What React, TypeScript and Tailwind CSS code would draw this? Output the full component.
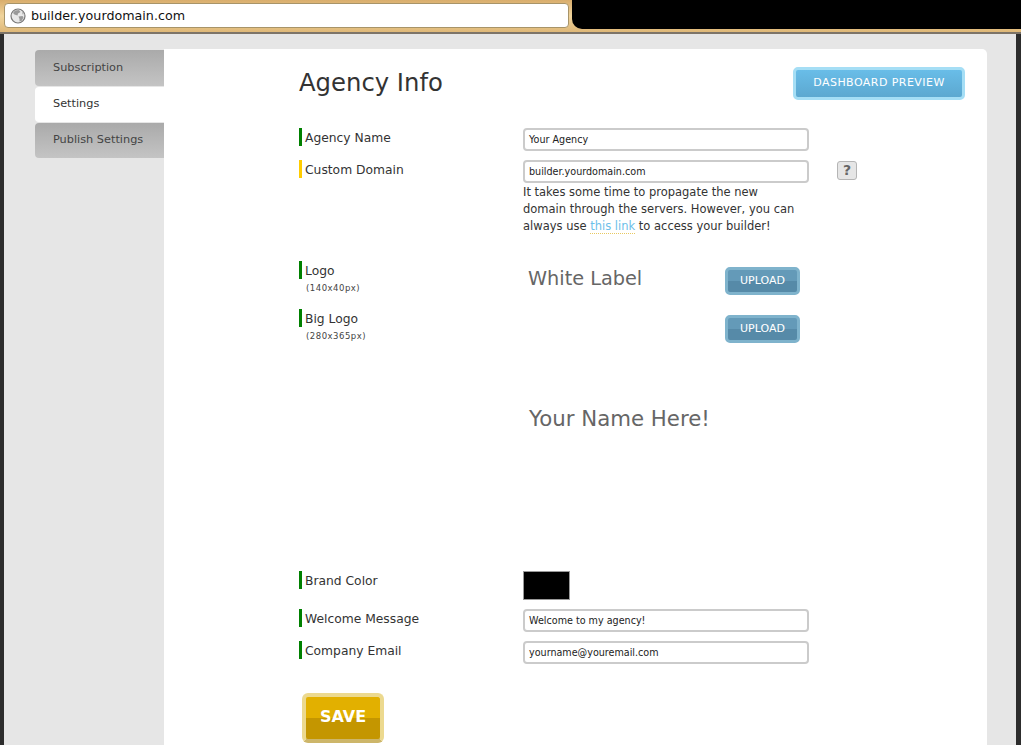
const font = "font-['DejaVu_Sans',sans-serif]";

function Globe() {
  return (
    <svg width="16" height="16" viewBox="0 0 16 16" className="shrink-0">
      <circle cx="8" cy="8" r="7" fill="#e8e8e8" stroke="#777" strokeWidth="1.2" />
      <path d="M5 2.5 L9 2 L10.5 4 L8 5.5 L7.5 7.5 L4.5 6.5 L3 5 Z" fill="#999" />
      <path d="M8.5 8.5 L12.5 8 L13.5 9.5 L11.5 13 L9.5 13.5 L9.5 11 Z" fill="#999" />
      <path d="M12 3.5 L14 6 L12.5 6.5 Z" fill="#aaa" />
    </svg>
  );
}

function Label({ text, hint, color = "bg-[#008000]" }: { text: string; hint?: string; color?: string }) {
  return (
    <div className="w-[224px] shrink-0">
      <div className="flex">
        <span className={`w-[3px] h-[18px] shrink-0 ${color}`} />
        <span className="ml-[3px] mt-px text-[12.3px] leading-[18px] text-[#333]">{text}</span>
      </div>
      {hint && <div className="ml-[7px] text-[8.5px] tracking-[0.5px] leading-[11px] mt-[3px] text-[#444]">{hint}</div>}
    </div>
  );
}

function Field({ value }: { value: string }) {
  return (
    <div className="w-[286px] h-[23px] border-2 border-[#cbcbcb] rounded-[4px] bg-white pl-[4px] text-[9.6px] leading-[19px] text-[#222]">
      {value}
    </div>
  );
}

function UploadButton() {
  return (
    <div className="w-[75px] h-[28px] rounded-[5px] border-[3px] border-[#7fb3cc] bg-[linear-gradient(#649ab8_50%,#568aa8_50%)] text-center text-[11px] leading-[21px] text-white">
      UPLOAD
    </div>
  );
}

function Tab({ text, active, height }: { text: string; active?: boolean; height: string }) {
  return (
    <div
      className={`pl-[18px] text-[11.3px] rounded-l-[4px] flex items-center ${height} ${
        active ? "bg-white text-[#333]" : "bg-[linear-gradient(#aaaaaa,#c4c4c4)] text-[#444]"
      }`}
    >
      {text}
    </div>
  );
}

export default function App() {
  return (
    <div className={`w-[1021px] h-[745px] overflow-hidden flex flex-col bg-[#2d2d2d] ${font}`}>
      <div className="h-[34px] shrink-0 flex bg-[linear-gradient(#d9ad6c,#f0d49c_50%,#dfb878)] border-b-2 border-[#7d7468]">
        <div className="ml-[4px] mt-[3px] w-[565px] h-[25px] bg-white rounded-[4px] border border-[#a89468] flex items-center pl-[5px] gap-[5px]">
          <Globe />
          <span className="text-[12.7px] text-[#111]">builder.yourdomain.com</span>
        </div>
        <div className="ml-[3px] flex-1 h-[29px] bg-black rounded-bl-[10px]" />
      </div>

      <div className="flex-1 mx-[4px] mr-[5px] bg-[#e6e6e6] flex pt-[15px] pl-[31px] pr-[29px] overflow-hidden">
        <div className="w-[129px] shrink-0 pt-px flex flex-col gap-px">
          <Tab text="Subscription" height="h-[36px]" />
          <Tab text="Settings" active height="h-[35px]" />
          <Tab text="Publish Settings" height="h-[35px]" />
        </div>

        <div className="flex-1 bg-white rounded-tr-[5px] pl-[135px] pr-[22px] pt-[18px]">
          <div className="flex justify-between h-[61px]">
            <h1 className="text-[24.3px] leading-[30px] text-[#333] mt-[1px]">Agency Info</h1>
            <div className="w-[172px] h-[33px] rounded-[5px] border-[3px] border-[#a5def5] bg-[linear-gradient(#69bde8,#5ca8d0)] text-center text-[11px] tracking-[0.45px] leading-[26px] text-white">
              DASHBOARD PREVIEW
            </div>
          </div>

          <div className="flex h-[32px]">
            <Label text="Agency Name" />
            <Field value="Your Agency" />
          </div>

          <div className="flex h-[101px]">
            <Label text="Custom Domain" color="bg-[#ffcc00]" />
            <div>
              <div className="flex">
                <Field value="builder.yourdomain.com" />
                <div className="ml-[28px] mt-[1px] w-[20px] h-[19px] rounded-[3px] border border-[#b5b5b5] bg-[#e6e6e6] text-center text-[14px] leading-[17px] font-bold text-[#666]">
                  ?
                </div>
              </div>
              <p className="w-[275px] mt-[1px] text-[11.5px] leading-[17px] text-[#333]">
                It takes some time to propagate the new domain through the servers. However, you can always use{" "}
                <span className="text-[#6cc0ea] border-b border-dotted border-[#e8c860]">this link</span> to access your builder!
              </p>
            </div>
          </div>

          <div className="flex h-[48px]">
            <Label text="Logo" hint="(140x40px)" />
            <div className="w-[277px] flex justify-between">
              <span className="ml-[5px] mt-[4px] text-[19.3px] leading-[28px] text-[#666]">White Label</span>
              <div className="mt-[6px]"><UploadButton /></div>
            </div>
          </div>

          <div className="flex h-[262px]">
            <Label text="Big Logo" hint="(280x365px)" />
            <div className="w-[277px]">
              <div className="flex justify-end mt-[6px]"><UploadButton /></div>
              <div className="ml-[6px] mt-[61px] text-[21.3px] leading-[30px] text-[#666] whitespace-nowrap">Your Name Here!</div>
            </div>
          </div>

          <div className="flex h-[38px]">
            <Label text="Brand Color" />
            <div className="w-[47px] h-[29px] bg-black border border-[#999]" />
          </div>

          <div className="flex h-[32px]">
            <Label text="Welcome Message" />
            <Field value="Welcome to my agency!" />
          </div>

          <div className="flex h-[52px]">
            <Label text="Company Email" />
            <Field value="yourname@youremail.com" />
          </div>

          <div className="ml-[3px] w-[82px] h-[50px] rounded-[6px] border-[4px] border-[#ecd98f] border-b-[#cdb66a] bg-[linear-gradient(#e2b000_50%,#c49600_50%)] text-center text-[16px] leading-[40px] font-bold text-white">
            SAVE
          </div>
        </div>
      </div>
    </div>
  );
}
